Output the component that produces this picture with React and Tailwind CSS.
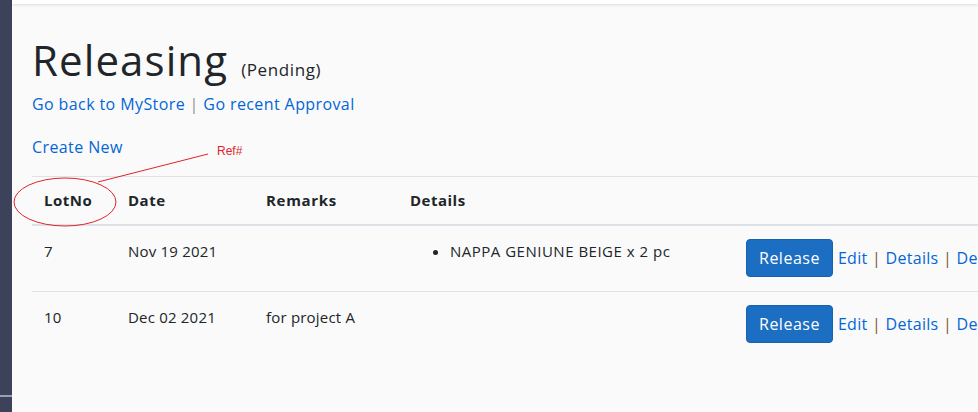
export default function App() {
  const rows = [
    { lot: "7", date: "Nov 19 2021", remarks: "", items: ["NAPPA GENIUNE BEIGE x 2 pc"] },
    { lot: "10", date: "Dec 02 2021", remarks: "for project A", items: [] },
  ];

  return (
    <div className="flex h-[412px] w-[978px] overflow-hidden bg-[#fafafa] font-['Open_Sans',sans-serif] text-[#212529]">
      {/* Sidebar strip */}
      <div className="flex w-[12px] shrink-0 flex-col bg-[#3b4259]">
        <div className="h-[395px]" />
        <div className="h-[2px] bg-[#9aa0ad]" />
      </div>

      <div className="relative flex min-w-0 flex-1 flex-col">
        {/* Top bar */}
        <div className="h-[4px] bg-white shadow-[0_1px_3px_rgba(0,0,0,0.12)]" />

        <div className="flex flex-col pl-[20px] pt-[30px]">
          <div className="flex items-baseline gap-[13px]">
            <h1 className="text-[42px] leading-[52px] font-normal tracking-[1.1px]">Releasing</h1>
            <span className="text-[17px] font-medium tracking-[0.6px]">(Pending)</span>
          </div>

          <div className="mt-[6px] text-[16px] leading-[24px] tracking-[0.4px] text-[#0366d6]">
            <a>Go back to MyStore</a>
            <span className="text-[#8a8f98]"> | </span>
            <a>Go recent Approval</a>
          </div>

          <div className="mt-[19px] text-[16px] leading-[24px] tracking-[0.4px] text-[#0366d6]">
            <a>Create New</a>
          </div>

          <table className="mt-[17px] w-[1100px] table-fixed border-collapse text-[15px] tracking-[0.2px]">
            <colgroup>
              <col className="w-[84px]" />
              <col className="w-[138px]" />
              <col className="w-[144px]" />
              <col className="w-[336px]" />
              <col className="w-[398px]" />
            </colgroup>
            <thead>
              <tr className="border-t border-b-2 border-t-[#dee2e6] border-b-[#dee2e6]">
                <th className="p-[12px] text-left align-bottom leading-[23px] font-bold tracking-[0.5px]">LotNo</th>
                <th className="p-[12px] text-left align-bottom leading-[23px] font-bold tracking-[0.5px]">Date</th>
                <th className="p-[12px] text-left align-bottom leading-[23px] font-bold tracking-[0.7px]">Remarks</th>
                <th className="p-[12px] text-left align-bottom leading-[23px] font-bold tracking-[0.5px]">Details</th>
                <th className="p-[12px]" />
              </tr>
            </thead>
            <tbody>
              {rows.map((r, i) => (
                <tr
                  key={r.lot}
                  className={i === 0 ? "h-[66px] border-b border-[#dee2e6]" : "h-[66px]"}
                >
                  <td className="px-[12px] pt-[13px] pb-[14px] align-top leading-[24px]">{r.lot}</td>
                  <td className="px-[12px] pt-[13px] pb-[14px] align-top leading-[24px]">{r.date}</td>
                  <td className="px-[12px] pt-[13px] pb-[14px] align-top leading-[24px]">{r.remarks}</td>
                  <td className="px-[12px] pt-[13px] pb-[14px] align-top leading-[24px]">
                    {r.items.length > 0 && (
                      <ul className="list-disc pl-[40px] tracking-[0.5px]">
                        {r.items.map((it) => (
                          <li key={it}>{it}</li>
                        ))}
                      </ul>
                    )}
                  </td>
                  <td className="whitespace-nowrap px-[12px] pt-[13px] pb-[14px] align-top">
                    <div className="flex items-center gap-[5px] text-[16px]">
                      <button className="h-[38px] rounded-[4px] border border-[#1861ac] bg-[#1b6ec2] px-[12px] text-[16px] tracking-[0.5px] text-white">
                        Release
                      </button>
                      <span className="tracking-[0.3px] text-[#0366d6]">
                        Edit<span className="text-[#7a5a3a]"> | </span>Details
                        <span className="text-[#7a5a3a]"> | </span>Delete
                      </span>
                    </div>
                  </td>
                </tr>
              ))}
            </tbody>
          </table>
        </div>

        {/* Annotation overlay */}
        <svg className="pointer-events-none absolute left-0 top-0" width="966" height="412">
          <ellipse cx="53" cy="202" rx="51" ry="24" fill="none" stroke="#e0242b" strokeWidth="1" />
          <line x1="86" y1="182" x2="196" y2="154" stroke="#e0242b" strokeWidth="1" />
        </svg>
        <span className="pointer-events-none absolute left-[205px] top-[142px] font-['Liberation_Sans',sans-serif] text-[12px] text-[#e0242b]">
          Ref#
        </span>
      </div>
    </div>
  );
}
